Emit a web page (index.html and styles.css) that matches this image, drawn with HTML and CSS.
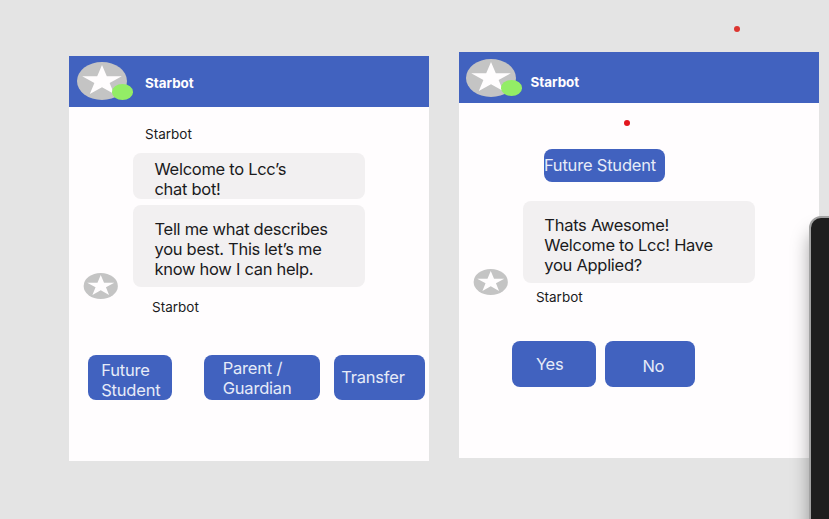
FILE: index.html
```html
<!DOCTYPE html>
<html lang="en">
<head>
<meta charset="utf-8">
<title>Starbot</title>
<link rel="stylesheet" href="styles.css">
</head>
<body>
<svg class="defs" aria-hidden="true">
  <symbol id="avatar" viewBox="0 0 50 38">
    <ellipse class="disc" cx="25" cy="19" rx="25" ry="19"/>
    <polygon class="star" points="25,3 29.8,14.2 44.8,14.2 32.6,21 37.2,32 25,25.3 12.8,32 17.4,21 5.2,14.2 20.2,14.2"/>
  </symbol>
</svg>
<main class="canvas">
  <section class="frame">
    <header class="bar">
      <div class="brand">
        <svg class="avatar-lg"><use href="#avatar"/></svg>
        <span class="online"></span>
      </div>
      <h1 class="title">Starbot</h1>
    </header>
    <p class="name name-top">Starbot</p>
    <div class="thread">
      <svg class="avatar-sm"><use href="#avatar"/></svg>
      <div class="bubbles">
        <p class="bubble short">Welcome to Lcc’s<br>chat bot!</p>
        <p class="bubble">Tell me what describes<br>you best. This let’s me<br>know how I can help.</p>
      </div>
    </div>
    <p class="name name-bottom">Starbot</p>
    <div class="choices">
      <button class="choice future">Future<br>Student</button>
      <button class="choice parent">Parent /<br>Guardian</button>
      <button class="choice transfer">Transfer</button>
    </div>
  </section>
  <section class="frame reply">
    <header class="bar">
      <div class="brand">
        <svg class="avatar-lg"><use href="#avatar"/></svg>
        <span class="online"></span>
      </div>
      <h1 class="title">Starbot</h1>
    </header>
    <div class="choice sent">Future Student</div>
    <div class="thread">
      <svg class="avatar-sm"><use href="#avatar"/></svg>
      <div class="bubbles">
        <p class="bubble">Thats Awesome!<br>Welcome to Lcc! Have<br>you Applied?</p>
      </div>
    </div>
    <p class="name name-bottom">Starbot</p>
    <div class="choices">
      <button class="choice yes">Yes</button>
      <button class="choice no">No</button>
    </div>
  </section>
  <i class="dot dot-outer"></i>
  <i class="dot dot-inner"></i>
  <aside class="device"></aside>
</main>
</body>
</html>
```
FILE: styles.css
```css
* { box-sizing: border-box; }
body { margin: 0; font-family: Inter, "Liberation Sans", sans-serif; color: #1b1b1d; }
p, h1 { margin: 0; }
.defs { position: absolute; width: 0; height: 0; }
.disc { fill: #c4c4c4; }
.star { fill: #fffdfe; }

.canvas {
  position: relative;
  display: flex;
  align-items: flex-start;
  gap: 29.7px;
  width: 829px;
  height: 519px;
  padding: 56px 0 0 69px;
  overflow: hidden;
  background: #e4e4e4;
}
.frame { flex: none; width: 360.2px; height: 405.3px; background: #fffdfe; }
.reply { margin-top: -3.8px; }

.bar { display: flex; align-items: center; height: 50.7px; padding-left: 8px; background: #4162bf; }
.brand { position: relative; width: 50px; height: 38px; }
.avatar-lg { display: block; width: 50px; height: 38px; }
.online { position: absolute; left: 34.5px; top: 21.5px; width: 21.5px; height: 16px; border-radius: 50%; background: #93ed66; }
.title { margin: 4px 0 0 18px; font-size: 13.4px; line-height: 16px; font-weight: 700; color: #fffdfe; }
.reply .brand { margin-left: -.4px; }
.reply .title { margin: 9px 0 0 14px; }

.name { font-size: 13.5px; line-height: 16px; }
.name-top { margin: 19.3px 0 11.5px 76px; }
.name-bottom { margin: 12.4px 0 0 83px; }
.reply .name-bottom { margin: 6px 0 0 77px; }

.thread { display: flex; align-items: flex-end; padding-left: 14.3px; gap: 14.2px; }
.avatar-sm { flex: none; width: 35.5px; height: 26px; margin-bottom: -12px; }
.bubbles { display: flex; flex-direction: column; gap: 6.5px; }
.bubble { width: 232px; height: 81.5px; padding: 14px 0 0 21.5px; border-radius: 8px; background: #f2f0f1; font-size: 16.5px; line-height: 20px; letter-spacing: -.29px; white-space: nowrap; }
.bubble.short { height: 45.5px; padding-top: 6px; }

.choices { display: flex; margin: 39.5px 0 0 18.7px; }
.choice { flex: none; display: block; height: 46px; border: 0; border-radius: 8px; background: #4162bf; color: #e6ebf8; font: 400 16.5px/20px Inter, "Liberation Sans", sans-serif; letter-spacing: -.2px; text-align: left; white-space: nowrap; }
.choices .choice { display: flex; align-items: flex-start; height: 45.3px; }
.future { width: 84.5px; padding: 5.4px 0 0 13.5px; }
.parent { width: 116.5px; margin-left: 31.5px; padding: 2.9px 0 0 19px; }
.transfer { width: 91.2px; margin-left: 14px; padding: 12px 0 0 7px; }
.reply .choices { margin: 36.8px 0 0 53px; }
.yes { width: 84.5px; padding: 13px 0 0 24px; }
.no { width: 90px; margin-left: 8.5px; padding: 14.5px 0 0 37.5px; }
.sent { width: 121.5px; height: 32.5px; margin: 46.3px 0 19.5px 85px; padding-top: 6px; }
.reply .bubble { padding-top: 13.5px; }

.dot { position: absolute; width: 6px; height: 6px; border-radius: 50%; background: #e3171e; }
.dot-outer { left: 734px; top: 26px; background: #dc3530; }
.dot-inner { left: 623.5px; top: 120px; }
.device {
  position: absolute;
  left: 809px;
  top: 216px;
  width: 120px;
  height: 400px;
  border: 2px solid #a2a2a2;
  border-radius: 12px;
  background: #1e1e1e;
  box-shadow: 0 16px 18px rgba(0, 0, 0, .34);
}
```
